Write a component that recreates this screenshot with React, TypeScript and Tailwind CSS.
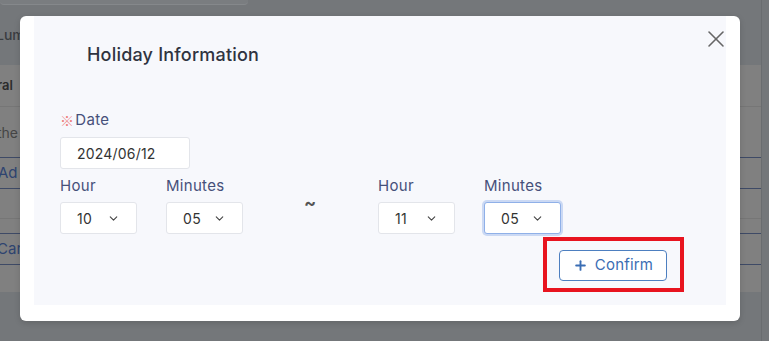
import { ChevronDown, X, Plus } from 'lucide-react'

function Select({ value, focused }: { value: string; focused?: boolean }) {
  return (
    <div
      className={`flex h-8 w-[77px] items-center justify-between rounded-[3px] bg-white pl-4 pr-[16px] text-[14px] tracking-[0.3px] text-[#333] ${
        focused ? 'border border-[#8fb0e8] shadow-[0_0_0_2px_rgba(120,160,230,0.35)]' : 'border border-[#e3e5ea]'
      }`}
    >
      <span>{value}</span>
      <ChevronDown size={13} strokeWidth={2} className="text-[#444]" />
    </div>
  )
}

function TimeGroup({ hour, minute, focused }: { hour: string; minute: string; focused?: boolean }) {
  return (
    <div className="flex gap-[29px]">
      <div className="flex flex-col gap-[7px]">
        <span className="text-[15px] leading-[18px] tracking-[0.3px] text-[#46507a]">Hour</span>
        <Select value={hour} />
      </div>
      <div className="flex flex-col gap-[7px]">
        <span className="text-[15px] leading-[18px] tracking-[0.3px] text-[#46507a]">Minutes</span>
        <Select value={minute} focused={focused} />
      </div>
    </div>
  )
}

export default function App() {
  return (
    <div className="relative h-[341px] w-[769px] overflow-hidden bg-[#74777a] font-['Inter',sans-serif]">
      {/* page underneath the overlay */}
      <div className="flex h-full w-[762px] flex-col border-r border-[#6a6d70]">
        <div className="h-[5px] w-[248px] rounded-b-[4px] border-b border-[#85888b] bg-[#7a7d80]" />
        <div className="flex h-[60px] items-center text-[14px] font-medium text-[#3a3c40]">
          <span className="-ml-[4px] mb-[2px]">Lum</span>
        </div>
        <div className="flex h-[227px] flex-col bg-[#808080]">
          <div className="flex h-[42px] items-center border-b border-[#767676] text-[13px] font-semibold text-[#2c2c2c]">
            <span className="-ml-[3px]">ral</span>
          </div>
          <div className="flex h-[50px] items-center text-[14px] text-[#454545]">
            <span className="-ml-[3px]">the</span>
          </div>
          <div className="flex h-[32px] items-center border-y border-[#3e4a66] text-[15px] text-[#2e4470]">
            <span className="-ml-[2px]">Ad</span>
          </div>
          <div className="h-[30px] border-b border-[#767676]" />
          <div className="h-[14px]" />
          <div className="flex h-[32px] items-center border-y border-[#3e4a66] text-[15px] text-[#2e4470]">
            <span className="-ml-[3px]">Car</span>
          </div>
        </div>
      </div>

      {/* modal */}
      <div className="absolute left-[20px] top-[16px] h-[305px] w-[720px] rounded-[6px] bg-white shadow-[0_2px_6px_rgba(0,0,0,0.15)]">
        <div className="ml-[14px] flex h-[289px] w-[692px] flex-col bg-[#f7f8fc] px-[26px]">
          <h2 className="ml-[27px] mt-[28px] text-[18px] font-medium leading-[22px] tracking-[0.2px] text-[#2f3340]">
            Holiday Information
          </h2>
          <div className="mt-[45px] flex items-center text-[15px] leading-[18px] tracking-[0.3px] text-[#46507a]">
            <span className="mr-[1px] font-['Noto_Sans_CJK_JP',sans-serif] text-[14px] text-[#ee7d7d]">※</span>
            <span>Date</span>
          </div>
          <div className="mt-[8px] flex h-8 w-[130px] items-center rounded-[3px] border border-[#e3e5ea] bg-white pl-4 text-[14px] tracking-[0.2px] text-[#333]">
            2024/06/12
          </div>
          <div className="mt-[8px] flex items-start">
            <TimeGroup hour="10" minute="05" />
            <span className="mx-[61px] mt-[12px] w-[13px] text-[18px] font-bold text-[#555]">~</span>
            <TimeGroup hour="11" minute="05" focused />
          </div>
          <div className="mt-[3px] flex justify-end pr-[16px]">
            <div className="border-[4px] border-[#e8141f] pb-[7px] pl-[12px] pr-[13px] pt-[9px]">
              <button className="flex h-[31px] w-[108px] items-center justify-center gap-[7px] rounded-[4px] border border-[#4d7fc0] bg-white text-[15px] tracking-[0.2px] text-[#3a6db4]">
                <Plus size={15} strokeWidth={3} />
                Confirm
              </button>
            </div>
          </div>
        </div>
        <button className="absolute right-[10px] top-[9px] text-[#666]">
          <X size={28} strokeWidth={1.3} />
        </button>
      </div>
    </div>
  )
}
